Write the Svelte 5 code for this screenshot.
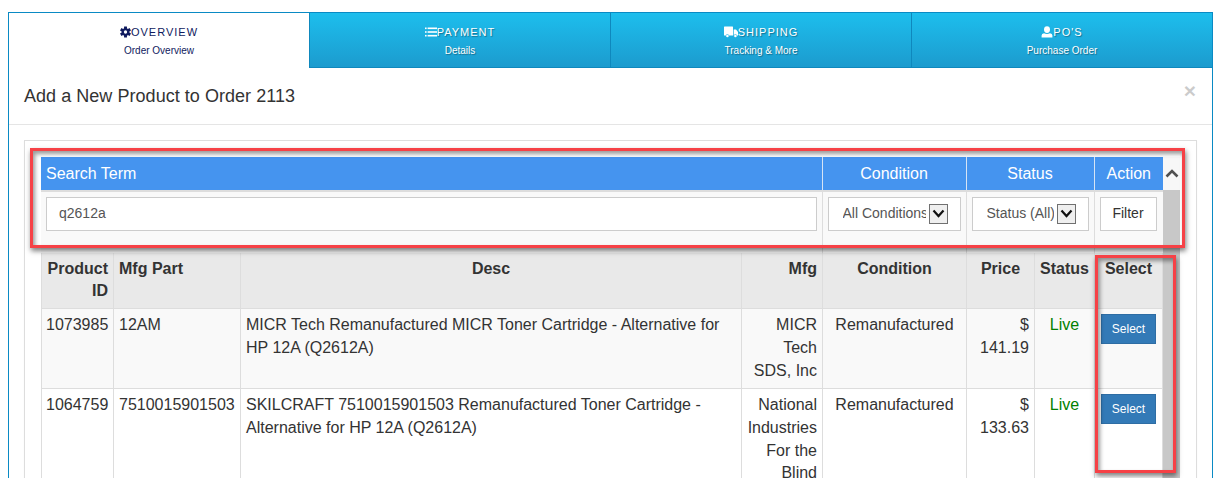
<script>
  const tabs = [
    { key: 'cog', title: 'Overview', sub: 'Order Overview', active: true },
    { key: 'list', title: 'Payment', sub: 'Details' },
    { key: 'truck', title: 'Shipping', sub: 'Tracking & More' },
    { key: 'user', title: "PO's", sub: 'Purchase Order' }
  ];

  const products = [
    {
      id: '1073985',
      part: '12AM',
      desc: 'MICR Tech Remanufactured MICR Toner Cartridge - Alternative for HP 12A (Q2612A)',
      mfg: 'MICR Tech SDS, Inc',
      condition: 'Remanufactured',
      price: '$ 141.19',
      status: 'Live'
    },
    {
      id: '1064759',
      part: '7510015901503',
      desc: 'SKILCRAFT 7510015901503 Remanufactured Toner Cartridge - Alternative for HP 12A (Q2612A)',
      mfg: 'National Industries For the Blind',
      condition: 'Remanufactured',
      price: '$ 133.63',
      status: 'Live'
    }
  ];

  let term = 'q2612a';
</script>

<div class="modal">
  <div class="tabs">
    {#each tabs as tab}
      <div class="tab" class:active={tab.active}>
        <div class="tab-title">
          {#if tab.key === 'cog'}
            <svg width="11" height="12" viewBox="0 0 12 12" fill="currentColor">
              {#each [0, 60, 120] as angle}
                <rect x="4.4" y="0" width="3.2" height="12" rx="0.4" transform="rotate({angle} 6 6)" />
              {/each}
              <circle cx="6" cy="6" r="4.2" />
              <circle cx="6" cy="6" r="1.8" fill="#fff" />
            </svg>
          {:else if tab.key === 'list'}
            <svg width="12" height="12" viewBox="0 0 12 12" fill="currentColor">
              <rect x="0" y="1.5" width="1.6" height="1.6" />
              <rect x="0" y="5.2" width="1.6" height="1.6" />
              <rect x="0" y="8.9" width="1.6" height="1.6" />
              <rect x="2.6" y="1.5" width="9.4" height="1.6" />
              <rect x="2.6" y="5.2" width="9.4" height="1.6" />
              <rect x="2.6" y="8.9" width="9.4" height="1.6" />
            </svg>
          {:else if tab.key === 'truck'}
            <svg width="14" height="12" viewBox="0 0 14 12" fill="currentColor">
              <path d="M0 1 Q0 .5 .5 .5 H8.5 Q9 .5 9 1 V9.4 H5 A1.7 1.7 0 0 0 1.8 9.4 H.5 Q0 9.4 0 8.9 Z" />
              <path d="M9.7 3.5 H12 L14 6 V9.4 H13 A1.7 1.7 0 0 0 9.8 9.4 H9.7 Z" />
              <circle cx="3.4" cy="10" r="1.3" />
              <circle cx="11.4" cy="10" r="1.3" />
            </svg>
          {:else}
            <svg width="12" height="12" viewBox="0 0 12 12" fill="currentColor">
              <ellipse cx="6" cy="3.6" rx="3" ry="3.4" />
              <path d="M0.6 11.5 V9.6 Q0.6 7.6 3 7.2 Q6 8.6 9 7.2 Q11.4 7.6 11.4 9.6 V11.5 Z" />
            </svg>
          {/if}
          <span>{tab.title}</span>
        </div>
        <div class="tab-sub">{tab.sub}</div>
      </div>
    {/each}
  </div>

  <div class="modal-header">
    <h4>Add a New Product to Order 2113</h4>
    <button class="close" aria-label="Close">×</button>
  </div>

  <div class="modal-body">
    <div class="panel">
      <div class="tables">
        <table class="filter">
          <colgroup>
            <col style="width: 781px" />
            <col style="width: 144px" />
            <col style="width: 128px" />
            <col />
          </colgroup>
          <thead>
            <tr>
              <th class="left">Search Term</th>
              <th>Condition</th>
              <th>Status</th>
              <th>Action</th>
            </tr>
          </thead>
          <tbody>
            <tr>
              <td><input class="control" type="text" bind:value={term} /></td>
              <td>
                <div class="select-wrap">
                  <select class="control">
                    <option>All Conditions</option>
                  </select>
                  <span class="arrow">
                    <svg width="13" height="9" viewBox="0 0 13 9" fill="none" stroke="#111" stroke-width="2.2">
                      <path d="M1.5 1.5 L6.5 7 L11.5 1.5" />
                    </svg>
                  </span>
                </div>
              </td>
              <td>
                <div class="select-wrap">
                  <select class="control">
                    <option>Status (All)</option>
                  </select>
                  <span class="arrow">
                    <svg width="13" height="9" viewBox="0 0 13 9" fill="none" stroke="#111" stroke-width="2.2">
                      <path d="M1.5 1.5 L6.5 7 L11.5 1.5" />
                    </svg>
                  </span>
                </div>
              </td>
              <td><button class="btn-filter">Filter</button></td>
            </tr>
          </tbody>
        </table>

        <table class="results">
          <colgroup>
            <col style="width: 72px" />
            <col style="width: 127px" />
            <col style="width: 501px" />
            <col style="width: 81px" />
            <col style="width: 144px" />
            <col style="width: 68px" />
            <col style="width: 60px" />
            <col />
          </colgroup>
          <thead>
            <tr>
              <th class="right">Product ID</th>
              <th class="left">Mfg Part</th>
              <th>Desc</th>
              <th class="right">Mfg</th>
              <th>Condition</th>
              <th>Price</th>
              <th>Status</th>
              <th>Select</th>
            </tr>
          </thead>
          <tbody>
            {#each products as p}
              <tr>
                <td>{p.id}</td>
                <td>{p.part}</td>
                <td>{p.desc}</td>
                <td class="right">{p.mfg}</td>
                <td class="center">{p.condition}</td>
                <td class="right">{p.price}</td>
                <td class="center live">{p.status}</td>
                <td class="center"><button class="btn-select">Select</button></td>
              </tr>
            {/each}
          </tbody>
        </table>
      </div>

      <div class="scrollbar">
        <div class="scroll-up">
          <svg width="14" height="9" viewBox="0 0 14 9" fill="none" stroke="#505050" stroke-width="2.6">
            <path d="M1.5 7.5 L7 2 L12.5 7.5" />
          </svg>
        </div>
        <div class="scroll-thumb"></div>
      </div>

      <div class="mark mark-filter"></div>
      <div class="mark mark-select"></div>
    </div>
  </div>
</div>

<style>
  :global(body) {
    margin: 0;
    height: 478px;
    overflow: hidden;
    background: #fff;
  }

  .modal {
    margin: 12px 0 0 8px;
    width: 1205px;
    height: 466px;
    overflow: hidden;
    box-sizing: border-box;
    border: 1px solid #0a8ac4;
    border-bottom: none;
    font-family: "Liberation Sans", Arial, sans-serif;
    font-size: 16px;
    line-height: 22.86px;
    color: #333;
  }

  .tabs {
    display: flex;
    height: 55px;
  }

  .tab {
    flex: 1;
    box-sizing: border-box;
    padding-top: 11px;
    text-align: center;
    color: #fff;
    background: linear-gradient(#1dbeed, #1c9bce);
    border-left: 1px solid #0f88bd;
    border-bottom: 1px solid #0f88bd;
    text-shadow: 1px 1px 1px rgba(0, 0, 0, 0.35);
  }

  .tab:first-child {
    border-left: none;
  }

  .tab.active {
    background: #fff;
    color: #0f1a5e;
    border-bottom: none;
    text-shadow: none;
  }

  .tab-title {
    display: flex;
    justify-content: center;
    align-items: center;
    height: 16px;
    font-size: 11px;
    line-height: 16px;
    letter-spacing: 1px;
    text-transform: uppercase;
  }

  .tab-sub {
    margin-top: 4px;
    font-size: 10px;
    line-height: 14px;
  }

  .modal-header {
    display: flex;
    justify-content: space-between;
    align-items: flex-start;
    padding: 16px 16px 14px 15px;
    border-bottom: 1px solid #e5e5e5;
  }

  h4 {
    margin: 0;
    font-size: 18px;
    font-weight: 400;
    line-height: 25.7px;
    letter-spacing: 0.04px;
  }

  .close {
    margin-top: -4px;
    padding: 0;
    border: none;
    background: none;
    font-family: inherit;
    font-size: 21px;
    font-weight: 700;
    line-height: 21px;
    color: #000;
    opacity: 0.2;
  }

  .modal-body {
    padding: 15px;
  }

  .panel {
    position: relative;
    display: flex;
    padding: 16px;
    border: 1px solid #ddd;
    box-shadow: 0 1px 1px rgba(0, 0, 0, 0.05);
    height: 500px;
    box-sizing: border-box;
  }

  .tables {
    width: 1122px;
    flex: none;
  }

  table {
    width: 100%;
    table-layout: fixed;
    border-collapse: collapse;
  }

  th,
  td {
    border: 1px solid #ddd;
    padding: 5px;
    vertical-align: top;
  }

  th:first-child,
  td:first-child {
    padding-left: 4px;
  }

  .filter th {
    height: 33px;
    padding: 6px 5px 4px;
    box-sizing: border-box;
    background: #4594ef;
    color: #fff;
    font-weight: 400;
    text-align: center;
    border: none;
    border-left: 1px solid #d6e4f5;
  }

  .filter th:first-child {
    border-left: none;
    padding-left: 5px;
  }

  .filter thead tr {
    border-bottom: 2px solid #ddd;
  }

  .filter td {
    height: 62px;
    box-sizing: border-box;
    padding: 5px 5px 0;
    background: #f9f9f9;
    border-top: none;
    border-bottom: none;
  }

  .filter td:first-child,
  .filter td:last-child {
    border-left: none;
    border-right: none;
  }

  .left {
    text-align: left !important;
  }

  .right {
    text-align: right !important;
  }

  .center {
    text-align: center;
  }

  .control {
    display: block;
    width: 100%;
    height: 34px;
    box-sizing: border-box;
    padding: 5px 12px 7px;
    border: 1px solid #ccc;
    border-radius: 0;
    background: #fff;
    color: #555;
    font-family: inherit;
    font-size: 14px;
  }

  .select-wrap {
    position: relative;
  }

  select.control {
    appearance: none;
    padding: 5px 34px 7px 14px;
  }

  .arrow {
    position: absolute;
    top: 7px;
    right: 13px;
    display: flex;
    align-items: center;
    justify-content: center;
    width: 19px;
    height: 20px;
    box-sizing: border-box;
    border: 1px solid #707070;
    background: #efefef;
  }

  .btn-filter {
    display: block;
    width: 57px;
    height: 34px;
    padding: 0 0 2px;
    border: 1px solid #ccc;
    background: #fff;
    color: #333;
    font-family: inherit;
    font-size: 14px;
  }

  .results th {
    background: #e9e9e9;
    font-weight: 700;
    text-align: center;
  }

  .results thead th {
    border-top: none;
    border-bottom: 1px solid #ddd;
  }

  .results tbody tr:nth-child(odd) td {
    background: #f9f9f9;
  }

  .live {
    color: #008000;
  }

  .btn-select {
    display: block;
    width: 55px;
    height: 30px;
    margin: 0 auto;
    padding: 0;
    border: 1px solid #2e6da4;
    background: #337ab7;
    color: #fff;
    font-family: inherit;
    font-size: 12px;
  }

  .scrollbar {
    width: 17px;
    flex: none;
    display: flex;
    flex-direction: column;
  }

  .scroll-up {
    height: 33px;
    display: flex;
    align-items: center;
    justify-content: center;
    background: #f7f7f7;
  }

  .scroll-thumb {
    flex: 1;
    background: #c8c8c8;
  }

  .mark {
    position: absolute;
    box-sizing: border-box;
    border: 3px solid #f64146;
    box-shadow: 1px 3px 5px rgba(0, 0, 0, 0.5), inset 2px 3px 4px rgba(0, 0, 0, 0.4);
  }

  .mark-filter {
    left: 5px;
    top: 7px;
    width: 1155px;
    height: 100px;
  }

  .mark-select {
    left: 1070px;
    top: 114px;
    width: 81px;
    height: 218px;
  }
</style>
